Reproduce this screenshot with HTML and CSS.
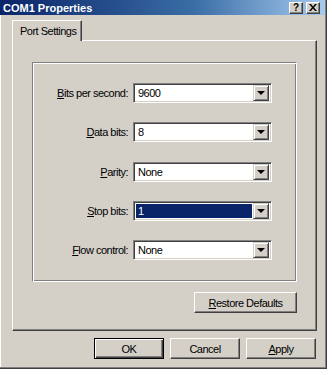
FILE: index.html
```html
<!DOCTYPE html>
<html lang="en">
<head>
    <meta charset="UTF-8">
    <title>COM1 Properties</title>
    <link rel="stylesheet" href="styles.css">
</head>
<body>
    <div class="window">
        <div class="titlebar">
            <span class="title">COM1 Properties</span>
            <div class="title-buttons">
                <span class="tbtn">?</span>
                <span class="tbtn close">
                    <svg width="8" height="7" viewBox="0 0 8 7"><path d="M0 0h2l2 2.5L6 0h2L5 3.5 8 7H6L4 4.5 2 7H0l3-3.5z" fill="#000"/></svg>
                </span>
            </div>
        </div>

        <div class="content">
            <div class="tabs">
                <div class="tab active">Port Settings</div>
            </div>

            <div class="panel">
                <div class="group">
                    <div class="row">
                        <label><u>B</u>its per second:</label>
                        <div class="combo"><span class="value">9600</span><span class="drop"></span></div>
                    </div>
                    <div class="row">
                        <label><u>D</u>ata bits:</label>
                        <div class="combo"><span class="value">8</span><span class="drop"></span></div>
                    </div>
                    <div class="row">
                        <label><u>P</u>arity:</label>
                        <div class="combo"><span class="value">None</span><span class="drop"></span></div>
                    </div>
                    <div class="row">
                        <label><u>S</u>top bits:</label>
                        <div class="combo focused"><span class="value">1</span><span class="drop"></span></div>
                    </div>
                    <div class="row">
                        <label><u>F</u>low control:</label>
                        <div class="combo"><span class="value">None</span><span class="drop"></span></div>
                    </div>
                </div>
                <div class="panel-actions">
                    <button class="btn restore"><u>R</u>estore Defaults</button>
                </div>
            </div>

            <div class="dialog-actions">
                <button class="btn default">OK</button>
                <button class="btn">Cancel</button>
                <button class="btn"><u>A</u>pply</button>
            </div>
        </div>
    </div>
</body>
</html>
```

FILE: styles.css
```css
body {
    margin: 0;
    background: #fff;
    font-family: 'Liberation Sans', Arial, sans-serif;
    font-size: 11px;
    letter-spacing: -0.5px;
    color: #000;
}
.window {
    width: 327px;
    height: 369px;
    box-sizing: border-box;
    background: #d4d0c8;
    border-right: 1px solid #404040;
    border-bottom: 1px solid #404040;
    box-shadow: inset -1px -1px 0 #808080, inset 1px 0 0 #fff;
}
.titlebar {
    height: 15px;
    margin-right: 1px;
    display: flex;
    align-items: center;
    justify-content: space-between;
    padding: 0 5px 0 3px;
    background: linear-gradient(to right, #0a246a, #3a6ea5 60%, #a6caf0);
}
.title {
    color: #fff;
    font-weight: bold;
    letter-spacing: 0;
}
.title-buttons {
    display: flex;
    gap: 3px;
}
.tbtn {
    width: 14px;
    height: 12px;
    box-sizing: border-box;
    display: flex;
    align-items: center;
    justify-content: center;
    background: #d4d0c8;
    border: 1px solid;
    border-color: #fff #404040 #404040 #fff;
    box-shadow: inset -1px -1px 0 #808080;
    font-weight: bold;
    font-size: 10px;
    letter-spacing: 0;
    line-height: 1;
}
.content {
    padding: 5px 9px 0 12px;
}
.tabs {
    display: flex;
    height: 20px;
}
.tab {
    width: 70px;
    height: 21px;
    box-sizing: border-box;
    padding: 4px 0 0 7px;
    background: #d4d0c8;
    border: 1px solid;
    border-color: #fff #404040 transparent #fff;
    border-bottom: none;
    box-shadow: inset -1px 0 0 #808080;
    position: relative;
    z-index: 1;
}
.panel {
    border: 1px solid;
    border-color: #fff #404040 #404040 #fff;
    box-shadow: inset -1px -1px 0 #808080;
    padding: 21px 19px 17px 19px;
}
.group {
    border: 1px solid;
    border-color: #808080 #fff #fff #808080;
    box-shadow: inset 1px 1px 0 #fff, inset -1px -1px 0 #808080;
    padding: 20px 0 21px 0;
    display: flex;
    flex-direction: column;
    gap: 19.25px;
}
.row {
    display: grid;
    grid-template-columns: 95px 139px;
    column-gap: 5px;
    align-items: center;
    height: 20px;
}
.row label {
    text-align: right;
}
.combo {
    height: 20px;
    box-sizing: border-box;
    display: flex;
    align-items: center;
    background: #fff;
    border: 1px solid;
    border-color: #808080 #fff #fff #808080;
    box-shadow: inset 1px 1px 0 #404040, inset -1px -1px 0 #d4d0c8;
    padding: 2px;
}
.combo .value {
    flex: 1;
    height: 14px;
    line-height: 14px;
    padding-left: 2px;
    margin-right: 1px;
}
.combo.focused .value {
    background: #0a246a;
    color: #fff;
}
.drop {
    width: 16px;
    height: 16px;
    box-sizing: border-box;
    background: #d4d0c8;
    border: 1px solid;
    border-color: #d4d0c8 #404040 #404040 #d4d0c8;
    box-shadow: inset 1px 1px 0 #fff, inset -1px -1px 0 #808080;
    position: relative;
}
.drop::after {
    content: '';
    position: absolute;
    left: 3px;
    top: 5px;
    border-left: 4px solid transparent;
    border-right: 4px solid transparent;
    border-top: 4px solid #000;
}
.panel-actions {
    display: flex;
    justify-content: flex-end;
    margin-top: 10px;
}
.btn {
    width: 70px;
    height: 21px;
    box-sizing: border-box;
    padding: 0;
    font: inherit;
    letter-spacing: inherit;
    color: #000;
    background: #d4d0c8;
    border: 1px solid;
    border-color: #fff #404040 #404040 #fff;
    box-shadow: inset -1px -1px 0 #808080;
}
.btn.restore {
    width: 103px;
}
.btn.default {
    border: 1px solid #000;
    box-shadow: inset 1px 1px 0 #fff, inset -1px -1px 0 #404040, inset -2px -2px 0 #808080;
}
.dialog-actions {
    display: flex;
    justify-content: flex-end;
    gap: 6px;
    margin-top: 7px;
    padding-right: 1px;
}
```
